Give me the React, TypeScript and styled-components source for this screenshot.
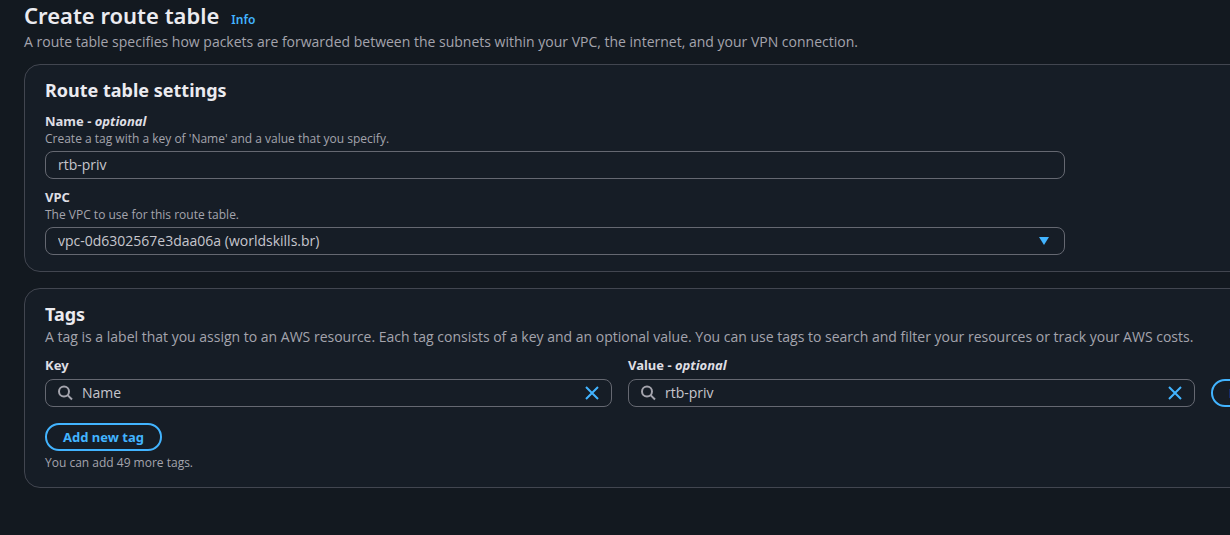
import React, { useState } from "react";
import styled, { createGlobalStyle } from "styled-components";

const boldFamily = `"Noto Sans", "Open Sans", sans-serif`;

const GlobalStyle = createGlobalStyle`
  *, *::before, *::after { box-sizing: border-box; }
  body {
    margin: 0;
    background: #131920;
    color: #c6c6cd;
    font-family: "Open Sans", "Noto Sans", sans-serif;
    font-size: 14px;
    line-height: 20px;
  }
  button, input, select { font: inherit; color: inherit; }
`;

const Page = styled.div`
  overflow: hidden;
`;

const Main = styled.main`
  display: flex;
  flex-direction: column;
  gap: 12px;
  margin: 0 -196px 0 24px;
`;

const Cards = styled.div`
  display: flex;
  flex-direction: column;
  gap: 16px;
`;

const TitleRow = styled.div`
  display: flex;
  align-items: baseline;
  gap: 12px;
  margin-bottom: 2px;
`;

const Title = styled.h1`
  margin: 0;
  color: #ebebf0;
  font-family: ${boldFamily};
  font-size: 22px;
  font-weight: 600;
  line-height: 30px;
`;

const InfoLink = styled.a`
  color: #42b4ff;
  font-family: ${boldFamily};
  font-size: 12px;
  font-weight: 600;
  line-height: 16px;
  text-decoration: none;
`;

const Description = styled.p`
  margin: 0;
  color: #a4a4ad;
`;

const Card = styled.section`
  padding: 12px 20px 16px;
  border: 1px solid #424650;
  border-radius: 16px;
  background: #161d26;
`;

const CardTitle = styled.h2`
  margin: 0;
  color: #ebebf0;
  font-family: ${boldFamily};
  font-size: 18px;
  font-weight: 700;
  line-height: 26px;
`;

const Fields = styled.div`
  display: flex;
  flex-direction: column;
  gap: 8px;
  width: 75%;
  margin-top: 8px;
`;

const Field = styled.div`
  display: flex;
  flex-direction: column;
`;

const Label = styled.label`
  color: #dedee3;
  font-family: ${boldFamily};
  font-size: 13px;
  font-weight: 700;
  line-height: 20px;
`;

const Hint = styled.p`
  margin: 0;
  color: #a4a4ad;
  font-size: 12px;
  line-height: 16px;
`;

const Control = styled.div`
  display: flex;
  align-items: center;
  gap: 8px;
  height: 28px;
  margin-top: 4px;
  padding: 0 12px;
  border: 1px solid #656871;
  border-radius: 8px;
`;

const TextInput = styled.input`
  flex: 1;
  min-width: 0;
  padding: 0;
  border: 0;
  outline: 0;
  background: transparent;
`;

const Select = styled.select`
  flex: 1;
  min-width: 0;
  padding: 0;
  border: 0;
  outline: 0;
  appearance: none;
  background: transparent;
`;

const Caret = styled.svg`
  flex: none;
  margin-right: 2px;
  pointer-events: none;
`;

const IconButton = styled.button`
  display: flex;
  padding: 0;
  border: 0;
  background: transparent;
  color: #42b4ff;
  cursor: pointer;
`;

const TagGrid = styled.div`
  display: grid;
  grid-template-columns: 1fr 1fr 194px;
  align-items: end;
  justify-items: stretch;
  column-gap: 16px;
  margin: 8px 0 16px;
`;

const PillButton = styled.button`
  justify-self: start;
  height: 28px;
  padding: 0 16px;
  border: 2px solid #42b4ff;
  border-radius: 14px;
  background: transparent;
  color: #42b4ff;
  font-family: ${boldFamily};
  font-size: 13px;
  font-weight: 700;
  line-height: 20px;
  white-space: nowrap;
  cursor: pointer;
`;

const TagHint = styled(Hint)`
  margin-top: 4px;
`;

const SearchIcon = () => (
  <svg width="16" height="16" viewBox="0 0 16 16" fill="none" stroke="#a4a4ad" strokeWidth="2" aria-hidden="true">
    <circle cx="6" cy="6.5" r="5" />
    <path d="M9.6 10.1 14 14.5" />
  </svg>
);

const CloseIcon = () => (
  <svg width="16" height="16" viewBox="0 0 16 16" fill="none" stroke="currentColor" strokeWidth="2" aria-hidden="true">
    <path d="M3 2 15 14M15 2 3 14" />
  </svg>
);

type SearchFieldProps = {
  id: string;
  label: React.ReactNode;
  value: string;
  onChange: (value: string) => void;
};

const SearchField = ({ id, label, value, onChange }: SearchFieldProps) => (
  <Field>
    <Label htmlFor={id}>{label}</Label>
    <Control>
      <SearchIcon />
      <TextInput id={id} value={value} onChange={(e) => onChange(e.target.value)} />
      <IconButton type="button" aria-label="Clear" onClick={() => onChange("")}>
        <CloseIcon />
      </IconButton>
    </Control>
  </Field>
);

export default function App() {
  const [name, setName] = useState("rtb-priv");
  const [tagKey, setTagKey] = useState("Name");
  const [tagValue, setTagValue] = useState("rtb-priv");

  return (
    <Page>
      <GlobalStyle />
      <Main>
        <header>
          <TitleRow>
            <Title>Create route table</Title>
            <InfoLink href="#info">Info</InfoLink>
          </TitleRow>
          <Description>
            A route table specifies how packets are forwarded between the subnets within your VPC, the internet, and
            your VPN connection.
          </Description>
        </header>

        <Cards>
          <Card>
            <CardTitle>Route table settings</CardTitle>
            <Fields>
              <Field>
                <Label htmlFor="name">
                  Name - <em>optional</em>
                </Label>
                <Hint>Create a tag with a key of 'Name' and a value that you specify.</Hint>
                <Control>
                  <TextInput id="name" value={name} onChange={(e) => setName(e.target.value)} />
                </Control>
              </Field>
              <Field>
                <Label htmlFor="vpc">VPC</Label>
                <Hint>The VPC to use for this route table.</Hint>
                <Control>
                  <Select id="vpc">
                    <option>vpc-0d6302567e3daa06a (worldskills.br)</option>
                  </Select>
                  <Caret width="12" height="8" viewBox="0 0 12 8" aria-hidden="true">
                    <path d="M1 0H11L6 8Z" fill="#42b4ff" />
                  </Caret>
                </Control>
              </Field>
            </Fields>
          </Card>

          <Card>
            <CardTitle>Tags</CardTitle>
            <Description>
              A tag is a label that you assign to an AWS resource. Each tag consists of a key and an optional value.
              You can use tags to search and filter your resources or track your AWS costs.
            </Description>
            <TagGrid>
              <SearchField id="tag-key" label="Key" value={tagKey} onChange={setTagKey} />
              <SearchField
                id="tag-value"
                label={
                  <>
                    Value - <em>optional</em>
                  </>
                }
                value={tagValue}
                onChange={setTagValue}
              />
              <PillButton type="button">Remove</PillButton>
            </TagGrid>
            <PillButton type="button">Add new tag</PillButton>
            <TagHint>You can add 49 more tags.</TagHint>
          </Card>
        </Cards>
      </Main>
    </Page>
  );
}
